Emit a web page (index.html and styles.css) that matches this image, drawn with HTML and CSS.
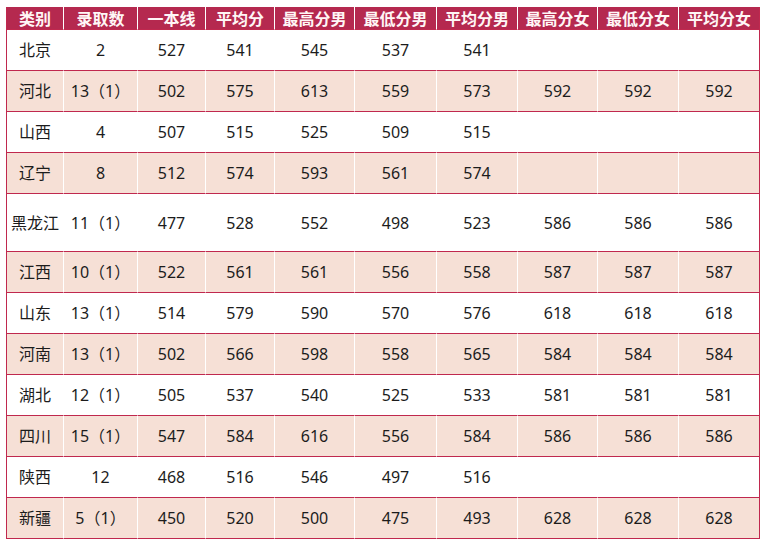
FILE: index.html
```html
<!DOCTYPE html>
<html lang="zh-CN">
<head>
<meta charset="utf-8">
<title>录取分数</title>
<link rel="stylesheet" href="styles.css">
</head>
<body>
<table class="scores">
  <colgroup>
    <col class="c1"><col class="c2"><col class="c3"><col class="c4"><col class="c5">
    <col class="c6"><col class="c7"><col class="c8"><col class="c9"><col class="c10">
  </colgroup>
  <thead>
    <tr class="head">
      <th>类别</th><th>录取数</th><th>一本线</th><th>平均分</th><th>最高分男</th><th>最低分男</th><th>平均分男</th><th>最高分女</th><th>最低分女</th><th>平均分女</th>
    </tr>
  </thead>
  <tbody>
    <tr><td>北京</td><td>2</td><td>527</td><td>541</td><td>545</td><td>537</td><td>541</td><td></td><td></td><td></td></tr>
    <tr class="alt"><td>河北</td><td>13（1）</td><td>502</td><td>575</td><td>613</td><td>559</td><td>573</td><td>592</td><td>592</td><td>592</td></tr>
    <tr><td>山西</td><td>4</td><td>507</td><td>515</td><td>525</td><td>509</td><td>515</td><td></td><td></td><td></td></tr>
    <tr class="alt"><td>辽宁</td><td>8</td><td>512</td><td>574</td><td>593</td><td>561</td><td>574</td><td></td><td></td><td></td></tr>
    <tr class="tall"><td>黑龙江</td><td>11（1）</td><td>477</td><td>528</td><td>552</td><td>498</td><td>523</td><td>586</td><td>586</td><td>586</td></tr>
    <tr class="alt"><td>江西</td><td>10（1）</td><td>522</td><td>561</td><td>561</td><td>556</td><td>558</td><td>587</td><td>587</td><td>587</td></tr>
    <tr><td>山东</td><td>13（1）</td><td>514</td><td>579</td><td>590</td><td>570</td><td>576</td><td>618</td><td>618</td><td>618</td></tr>
    <tr class="alt"><td>河南</td><td>13（1）</td><td>502</td><td>566</td><td>598</td><td>558</td><td>565</td><td>584</td><td>584</td><td>584</td></tr>
    <tr><td>湖北</td><td>12（1）</td><td>505</td><td>537</td><td>540</td><td>525</td><td>533</td><td>581</td><td>581</td><td>581</td></tr>
    <tr class="alt"><td>四川</td><td>15（1）</td><td>547</td><td>584</td><td>616</td><td>556</td><td>584</td><td>586</td><td>586</td><td>586</td></tr>
    <tr><td>陕西</td><td>12</td><td>468</td><td>516</td><td>546</td><td>497</td><td>516</td><td></td><td></td><td></td></tr>
    <tr class="alt"><td>新疆</td><td>5（1）</td><td>450</td><td>520</td><td>500</td><td>475</td><td>493</td><td>628</td><td>628</td><td>628</td></tr>
  </tbody>
</table>
</body>
</html>
```
FILE: styles.css
```css
html, body {
  margin: 0;
  padding: 0;
  background: #ffffff;
}

body {
  padding: 7px 0 0 6px;
  font-family: "Noto Sans", "Noto Sans CJK SC", sans-serif;
  font-size: 16px;
  color: #1c1c1c;
}

.scores {
  border-collapse: separate;
  border-spacing: 0;
  table-layout: fixed;
  width: 754px;
  border-left: 1px solid #c0284e;
  border-right: 1px solid #c0284e;
}

.c1 { width: 57px; }
.c2 { width: 74px; }
.c3 { width: 68px; }
.c4 { width: 69px; }
.c5 { width: 80px; }
.c6 { width: 82px; }
.c7 { width: 81px; }
.c8 { width: 80px; }
.c9 { width: 81px; }
.c10 { width: 80px; }

.scores th,
.scores td {
  padding: 0;
  text-align: center;
  vertical-align: middle;
  white-space: nowrap;
  border-right: 1px solid #ffffff;
  border-bottom: 1px solid #c0284e;
  line-height: 20px;
}

.scores th:last-child,
.scores td:last-child {
  border-right: 0;
}

.head {
  height: 23px;
}

.scores th {
  background: #b5294f;
  color: #fff6f6;
  font-weight: 700;
  font-family: "Noto Sans CJK SC", sans-serif;
  font-size: 16px;
  line-height: 20px;
}

.scores tbody tr {
  height: 41px;
}

.scores tbody tr.tall {
  height: 58px;
}

.scores tbody tr.alt td {
  background: #f6e0d6;
}
```
